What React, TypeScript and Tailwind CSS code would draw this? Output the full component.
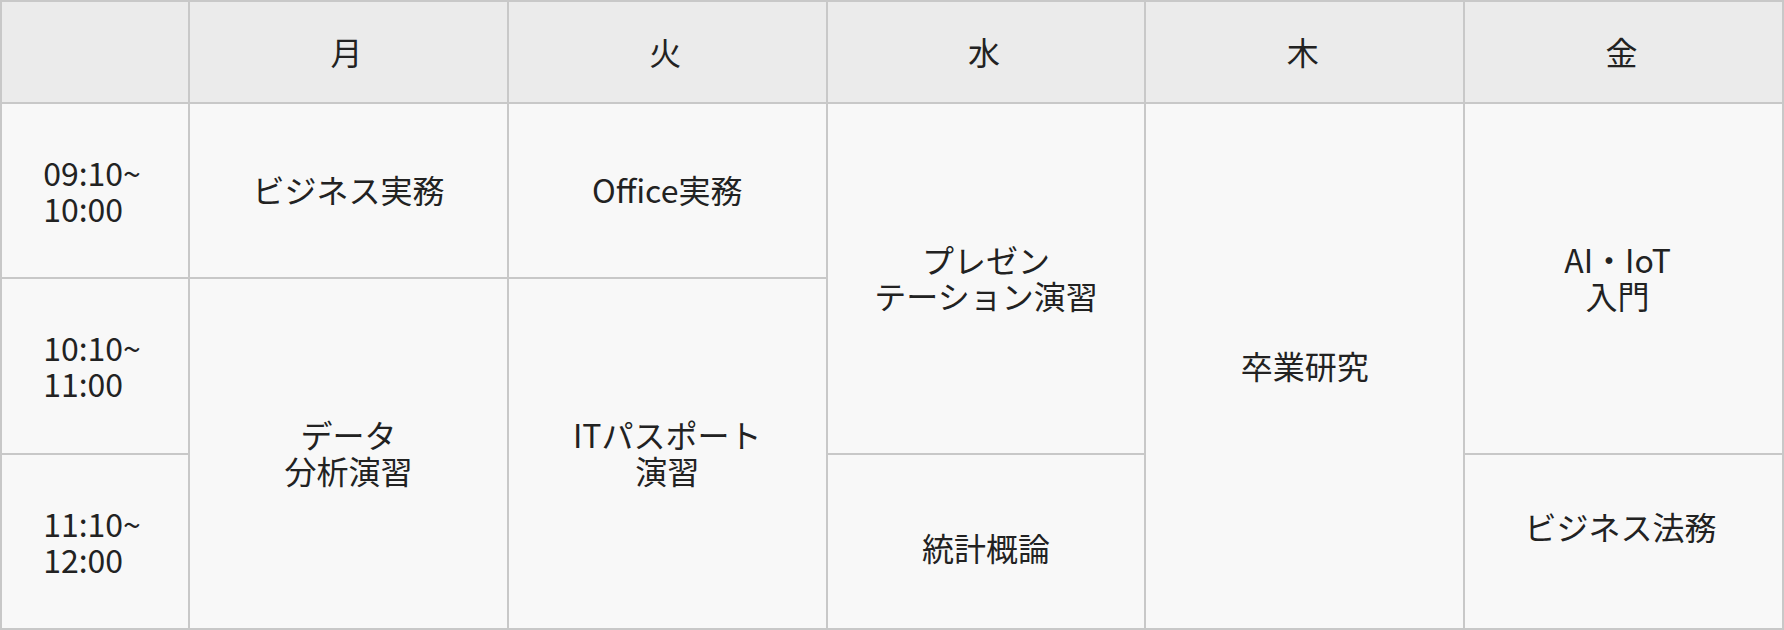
const days = ['月', '火', '水', '木', '金']

const times = [
  ['09:10~', '10:00'],
  ['10:10~', '11:00'],
  ['11:10~', '12:00'],
]

function Cell({
  lines,
  className = '',
}: {
  lines: string[]
  className?: string
}) {
  return (
    <div
      className={`flex items-center justify-center bg-[#f8f8f8] text-center ${className}`}
    >
      <div>
        {lines.map((l) => (
          <div key={l}>{l}</div>
        ))}
      </div>
    </div>
  )
}

export default function App() {
  return (
    <div
      className="grid h-[630px] w-[1784px] grid-cols-[186px_1fr_1fr_1fr_1fr_1fr] grid-rows-[100px_173px_174px_173px] gap-[2px] bg-[#c8c8c8] p-[2px] text-[32px] font-normal leading-[36px] text-[#222222]"
      style={{ fontFamily: '"Noto Sans CJK JP", "Noto Sans", sans-serif' }}
    >
      {/* ヘッダー */}
      <div className="bg-[#ebebeb]" />
      {days.map((d) => (
        <div
          key={d}
          className="flex items-center justify-center bg-[#ebebeb] pb-[2px] pr-[4px]"
        >
          {d}
        </div>
      ))}

      {/* 時間 */}
      {times.map((t, i) => (
        <div
          key={t[0]}
          className={`flex items-center justify-center bg-[#f8f8f8] pb-[2px] pr-[6px] ${
            i === 0 ? 'col-start-1 row-start-2' : i === 1 ? 'col-start-1 row-start-3' : 'col-start-1 row-start-4'
          }`}
        >
          <div className="text-left">
            <div>{t[0]}</div>
            <div>{t[1]}</div>
          </div>
        </div>
      ))}

      {/* 月 */}
      <Cell lines={['ビジネス実務']} className="col-start-2 row-start-2 pb-[3px]" />
      <Cell lines={['データ', '分析演習']} className="col-start-2 row-start-3 row-span-2 pb-[3px]" />

      {/* 火 */}
      <Cell lines={['Office実務']} className="col-start-3 row-start-2 pb-[3px]" />
      <Cell lines={['ITパスポート', '演習']} className="col-start-3 row-start-3 row-span-2 pb-[3px]" />

      {/* 水 */}
      <Cell lines={['プレゼン', 'テーション演習']} className="col-start-4 row-start-2 row-span-2 pb-[3px]" />
      <Cell lines={['統計概論']} className="col-start-4 row-start-4 pt-[10px]" />

      {/* 木 */}
      <Cell lines={['卒業研究']} className="col-start-5 row-start-2 row-span-3 pb-[3px]" />

      {/* 金 */}
      <Cell lines={['AI・IoT', '入門']} className="col-start-6 row-start-2 row-span-2 pb-[3px] pr-[12px]" />
      <Cell lines={['ビジネス法務']} className="col-start-6 row-start-4 pb-[32px] pr-[6px]" />
    </div>
  )
}
